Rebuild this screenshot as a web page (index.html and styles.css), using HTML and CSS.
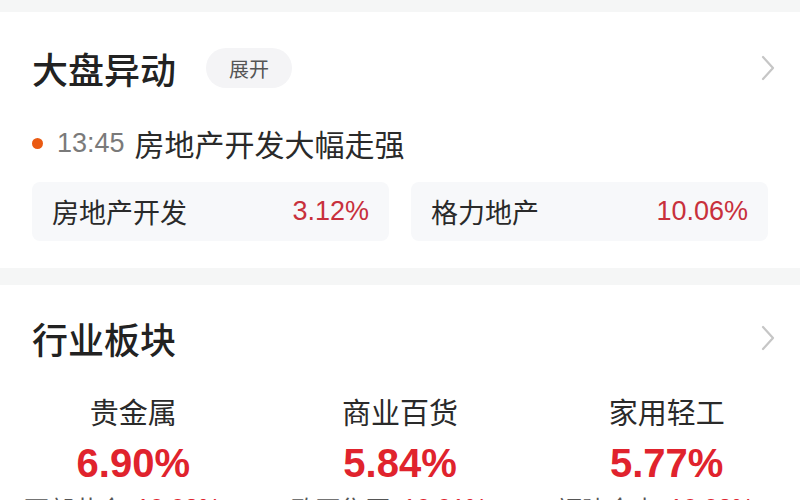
FILE: index.html
```html
<!DOCTYPE html>
<html lang="zh-CN">
<head>
<meta charset="utf-8">
<link rel="stylesheet" href="styles.css">
</head>
<body>
<section class="card card-move">
  <div class="head">
    <div class="head-left">
      <h2 class="title">大盘异动</h2>
      <span class="pill">展开</span>
    </div>
    <svg class="chev" viewBox="0 0 14 26" width="14" height="26"><path d="M2 2 L12 13 L2 24" fill="none" stroke="#c6c6c6" stroke-width="2.2" stroke-linecap="round" stroke-linejoin="round"/></svg>
  </div>
  <div class="event">
    <span class="dot"></span>
    <span class="time">13:45</span>
    <span class="event-text">房地产开发大幅走强</span>
  </div>
  <div class="boxes">
    <div class="box"><span class="box-name">房地产开发</span><span class="box-pct">3.12%</span></div>
    <div class="box"><span class="box-name">格力地产</span><span class="box-pct">10.06%</span></div>
  </div>
</section>
<section class="card card-ind">
  <div class="head">
    <h2 class="title">行业板块</h2>
    <svg class="chev" viewBox="0 0 14 26" width="14" height="26"><path d="M2 2 L12 13 L2 24" fill="none" stroke="#c6c6c6" stroke-width="2.2" stroke-linecap="round" stroke-linejoin="round"/></svg>
  </div>
  <div class="grid">
    <div class="col">
      <div class="ind-name">贵金属</div>
      <div class="ind-pct">6.90%</div>
      <div class="lead"><span class="lead-name">西部黄金</span><span class="lead-pct">10.02%</span></div>
    </div>
    <div class="col">
      <div class="ind-name">商业百货</div>
      <div class="ind-pct">5.84%</div>
      <div class="lead"><span class="lead-name">欧亚集团</span><span class="lead-pct">10.01%</span></div>
    </div>
    <div class="col">
      <div class="ind-name">家用轻工</div>
      <div class="ind-pct">5.77%</div>
      <div class="lead"><span class="lead-name">福建金森</span><span class="lead-pct">10.03%</span></div>
    </div>
  </div>
</section>
</body>
</html>
```
FILE: styles.css
```css
html, body {
  margin: 0;
  padding: 0;
}
body {
  background: #f5f6f6;
  font-family: "Liberation Sans", "Noto Sans CJK SC", sans-serif;
  color: #222;
  width: 800px;
  height: 500px;
  overflow: hidden;
}
.card {
  background: #fff;
}
.card-move {
  margin-top: 12px;
  height: 256px;
  box-sizing: border-box;
  padding: 36px 32px 0 32px;
}
.card-ind {
  margin-top: 17px;
  height: 215px;
  box-sizing: border-box;
  padding-top: 33px;
  overflow: hidden;
}
.head {
  display: flex;
  align-items: center;
  justify-content: space-between;
  height: 40px;
}
.card-ind .head {
  padding: 0 25px 0 32px;
}
.card-move .head {
  margin-right: -7px;
}
.head-left {
  display: flex;
  align-items: center;
}
.title {
  margin: 0;
  font-family: "Noto Sans CJK SC", sans-serif;
  font-weight: 500;
  font-size: 36px;
  line-height: 40px;
  color: #222;
}
.pill {
  margin-left: 30px;
  width: 86px;
  height: 40px;
  border-radius: 20px;
  background: #f4f4f6;
  display: flex;
  align-items: center;
  justify-content: center;
  font-family: "Noto Sans CJK SC", sans-serif;
  font-size: 20px;
  color: #555;
}
.chev {
  display: block;
}
.event {
  margin-top: 38px;
  display: flex;
  align-items: center;
  height: 34px;
}
.dot {
  width: 11px;
  height: 11px;
  border-radius: 50%;
  background: #ea5a12;
  margin-right: 14px;
}
.time {
  color: #7a7a7a;
  font-family: "Liberation Sans", sans-serif;
  font-size: 27px;
  margin-right: 10px;
}
.event-text {
  font-family: "Noto Sans CJK SC", sans-serif;
  color: #2a2a2a;
  font-size: 30px;
  line-height: 34px;
}
.boxes {
  margin-top: 22px;
  display: grid;
  grid-template-columns: 1fr 1fr;
  gap: 22px;
}
.box {
  height: 59px;
  border-radius: 8px;
  background: #f7f8fa;
  display: flex;
  align-items: center;
  justify-content: space-between;
  padding: 0 20px;
}
.box-name {
  font-family: "Noto Sans CJK SC", sans-serif;
  font-size: 27px;
  color: #2a2a2a;
}
.box-pct {
  font-size: 27px;
  color: #c8303c;
}
.grid {
  margin-top: 36px;
  display: grid;
  grid-template-columns: repeat(3, 1fr);
}
.col {
  display: flex;
  flex-direction: column;
  align-items: center;
}
.ind-name {
  font-family: "Noto Sans CJK SC", sans-serif;
  font-size: 29px;
  line-height: 34px;
  color: #2a2a2a;
}
.ind-pct {
  margin-top: 13px;
  font-size: 40px;
  line-height: 44px;
  font-weight: bold;
  color: #e0232d;
}
.lead {
  margin-top: 8px;
  margin-right: 22px;
  font-size: 25px;
  line-height: 30px;
  display: flex;
  gap: 12px;
}
.lead-name {
  font-family: "Noto Sans CJK SC", sans-serif;
  color: #555;
}
.lead-pct {
  color: #e0232d;
}
```
